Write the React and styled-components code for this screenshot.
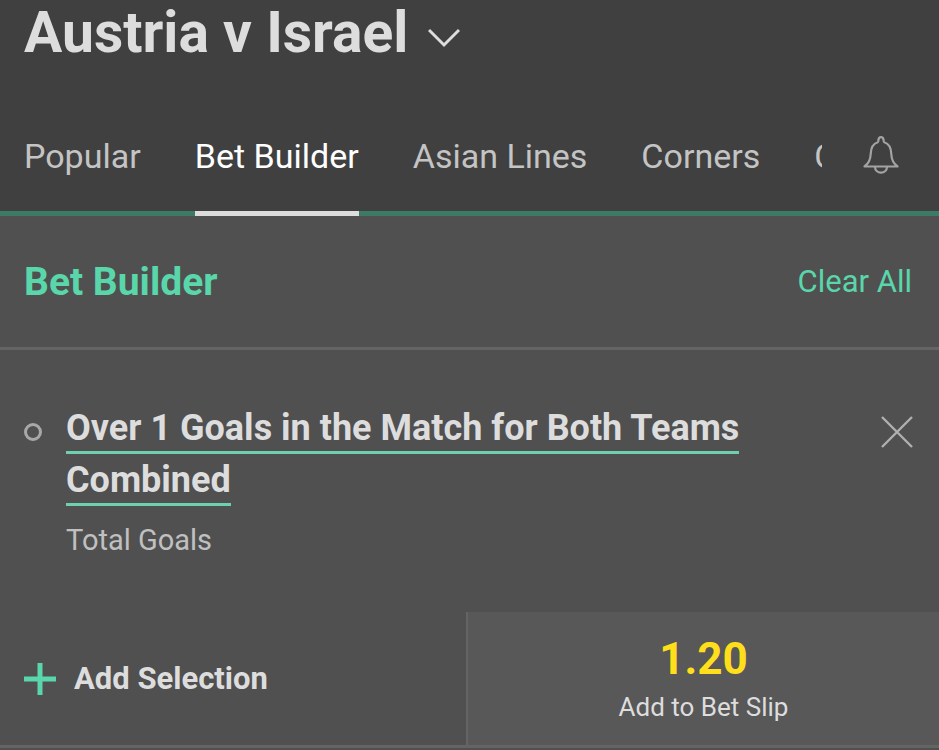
import styled, { createGlobalStyle } from 'styled-components';
import { useState } from 'react';

const TABS = ['Popular', 'Bet Builder', 'Asian Lines', 'Corners', 'Cards'];

export default function App() {
    const [activeTab, setActiveTab] = useState('Bet Builder');

    return (
        <Page>
            <GlobalStyle />
            <Header>
                <MatchButton type="button">
                    <h1>Austria v Israel</h1>
                    <svg width="32" height="20" viewBox="0 0 32 20" fill="none">
                        <path
                            d="M1 2 L16 17 L31 2"
                            stroke="#dddddd"
                            strokeWidth="3"
                        />
                    </svg>
                </MatchButton>
                <TabBar>
                    <Tabs>
                        {TABS.map((tab) => (
                            <Tab
                                key={tab}
                                type="button"
                                $active={tab === activeTab}
                                onClick={() => setActiveTab(tab)}
                            >
                                {tab}
                            </Tab>
                        ))}
                    </Tabs>
                    <BellButton type="button" aria-label="Alerts">
                        <svg
                            width="36"
                            height="38"
                            viewBox="0 0 36 38"
                            fill="none"
                            stroke="#a3a3a3"
                            strokeWidth="2.2"
                            strokeLinejoin="round"
                        >
                            <path d="M1.5 30.5 C5.5 27.5 7.5 24 7.7 18 C7.9 11 10.5 7.5 14.8 6.2 C15.4 6 15.3 5.2 15.4 4.2 C15.6 2.2 16.6 1.2 18 1.2 C19.4 1.2 20.4 2.2 20.6 4.2 C20.7 5.2 20.6 6 21.2 6.2 C25.5 7.5 28.1 11 28.3 18 C28.5 24 30.5 27.5 34.5 30.5 Z" />
                            <path d="M12 30.5 C12 34.5 14.7 36.6 18 36.6 C21.3 36.6 24 34.5 24 30.5" />
                        </svg>
                    </BellButton>
                </TabBar>
            </Header>

            <BuilderHeader>
                <h2>Bet Builder</h2>
                <ClearButton type="button">Clear All</ClearButton>
            </BuilderHeader>

            <Selection>
                <Bullet />
                <SelectionInfo>
                    <SelectionName>
                        <a href="#selection">
                            Over 1 Goals in the Match for Both Teams Combined
                        </a>
                    </SelectionName>
                    <Market>Total Goals</Market>
                </SelectionInfo>
                <RemoveButton type="button" aria-label="Remove selection">
                    <svg width="32" height="32" viewBox="0 0 32 32">
                        <path
                            d="M1 1 L31 31 M31 1 L1 31"
                            stroke="#b0b0b0"
                            strokeWidth="2.4"
                        />
                    </svg>
                </RemoveButton>
            </Selection>

            <Footer>
                <AddSelection type="button">
                    <svg width="32" height="32" viewBox="0 0 32 32">
                        <path
                            d="M16 0 V32 M0 16 H32"
                            stroke="#5ad6ab"
                            strokeWidth="5"
                        />
                    </svg>
                    Add Selection
                </AddSelection>
                <AddToSlip type="button">
                    <Odds>1.20</Odds>
                    <SlipLabel>Add to Bet Slip</SlipLabel>
                </AddToSlip>
            </Footer>
        </Page>
    );
}

const GlobalStyle = createGlobalStyle`
    * {
        box-sizing: border-box;
    }

    body {
        margin: 0;
        background-color: #505050;
        font-family: Roboto, sans-serif;
        color: #dddddd;
    }

    h1, h2, p {
        margin: 0;
    }

    button {
        padding: 0;
        border: none;
        background: none;
        color: inherit;
        font-family: inherit;
        cursor: pointer;
    }

    svg {
        display: block;
        flex-shrink: 0;
    }
`;

const Page = styled.main`
    background-color: #505050;
`;

const Header = styled.header`
    background-color: #404040;
`;

const MatchButton = styled.button`
    display: flex;
    align-items: center;
    gap: 20px;
    height: 104px;
    padding: 0 24px 38px;

    h1 {
        font-size: 57px;
        line-height: 66px;
        font-weight: 700;
    }

    svg {
        margin-top: 10px;
    }
`;

const TabBar = styled.div`
    display: flex;
    height: 112px;
    padding-left: 24px;
    box-shadow: inset 0 -5px #3e7b66;
`;

const Tabs = styled.nav`
    display: flex;
    flex: 1;
    gap: 54px;
    min-width: 0;
    overflow: hidden;
`;

const Tab = styled.button`
    flex-shrink: 0;
    padding-bottom: 3px;
    border-bottom: 5px solid
        ${({ $active }) => ($active ? '#dddddd' : 'transparent')};
    color: ${({ $active }) => ($active ? '#ffffff' : '#c4c4c4')};
    font-size: 34px;
    line-height: 40px;
`;

const BellButton = styled.button`
    display: flex;
    align-items: center;
    justify-content: center;
    width: 117px;
    padding-bottom: 10px;
`;

const BuilderHeader = styled.div`
    display: flex;
    align-items: center;
    justify-content: space-between;
    height: 134px;
    padding: 0 27px 0 24px;
    border-bottom: 3px solid #646464;
    color: #5ad6ab;

    h2 {
        font-size: 39px;
        line-height: 44px;
        font-weight: 700;
    }
`;

const ClearButton = styled.button`
    font-size: 31px;
    line-height: 40px;
`;

const Selection = styled.section`
    display: flex;
    align-items: flex-start;
    padding: 52px 26px 52px 24px;
`;

const Bullet = styled.span`
    flex-shrink: 0;
    width: 18px;
    height: 18px;
    margin: 21px 24px 0 0;
    border: 3px solid #a8a8a8;
    border-radius: 50%;
`;

const SelectionInfo = styled.div`
    flex: 1;
`;

const SelectionName = styled.p`
    max-width: 720px;
    font-size: 36px;
    line-height: 52px;
    font-weight: 700;

    a {
        padding-bottom: 2px;
        border-bottom: 3px solid #6fd0b0;
        color: #dddddd;
        text-decoration: none;
    }
`;

const Market = styled.p`
    padding-top: 14px;
    color: #c0c0c0;
    font-size: 29px;
    line-height: 40px;
`;

const RemoveButton = styled.button`
    margin-top: 14px;
`;

const Footer = styled.footer`
    display: grid;
    grid-template-columns: 466px 1fr;
    height: 136px;
    border-bottom: 3px solid #646464;

    @media (max-width: 800px) {
        grid-template-columns: 1fr 1fr;
    }
`;

const AddSelection = styled.button`
    display: flex;
    align-items: center;
    gap: 18px;
    padding-left: 24px;
    font-size: 31px;
    line-height: 40px;
    font-weight: 700;
`;

const AddToSlip = styled.button`
    display: flex;
    flex-direction: column;
    align-items: center;
    justify-content: center;
    border-left: 2px solid #646464;
    background-color: #585858;
`;

const Odds = styled.span`
    color: #ffdf1b;
    font-size: 44px;
    line-height: 56px;
    font-weight: 700;
`;

const SlipLabel = styled.span`
    font-size: 26px;
    line-height: 40px;
`;
